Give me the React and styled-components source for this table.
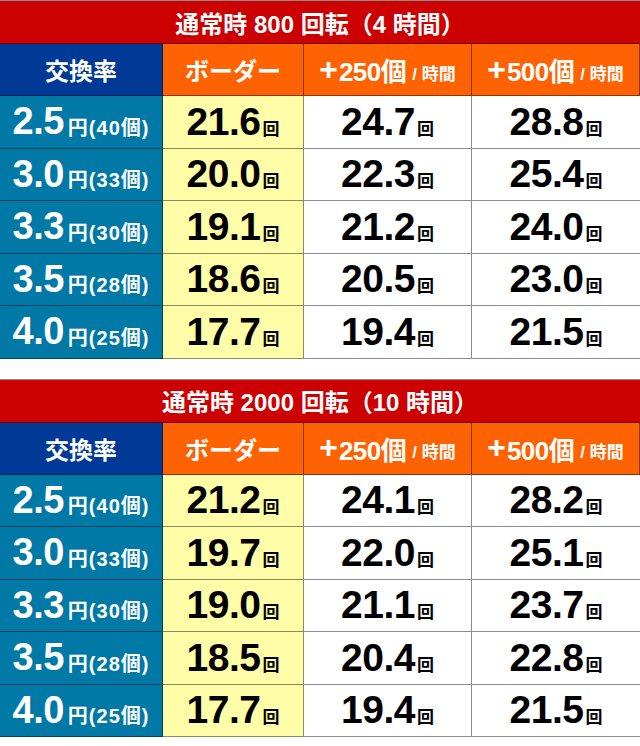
import React from 'react';
import styled, { createGlobalStyle } from 'styled-components';

const GlobalStyle = createGlobalStyle`
  html, body {
    margin: 0;
    padding: 0;
    background: #ffffff;
  }
  body {
    font-family: "Liberation Sans", "Noto Sans CJK JP", sans-serif;
    font-weight: 700;
  }
`;

const LINE = 'rgba(0, 0, 0, 0.45)';

const Page = styled.div`
  width: 640px;
  display: flex;
  flex-direction: column;
  gap: 20px;
`;

const Table = styled.section`
  display: grid;
  grid-template-columns: 163px 141px 168px 168px;
  grid-template-rows: 43px 52px repeat(5, 52.5px);
  border-top: 1px solid ${LINE};
  box-sizing: border-box;
`;

const Title = styled.div`
  grid-column: 1 / -1;
  background: #cc0000;
  color: #ffffff;
  font-size: 24px;
  display: flex;
  align-items: center;
  justify-content: center;
  border-bottom: 1px solid ${LINE};
`;

const Cell = styled.div`
  display: flex;
  align-items: center;
  justify-content: center;
  border-bottom: 1px solid ${LINE};
  border-right: 1px solid ${LINE};
  box-sizing: border-box;
  white-space: nowrap;
`;

const HeadCell = styled(Cell)`
  background: ${(p) => (p.$blue ? '#003a96' : '#ff6200')};
  color: #ffffff;
  font-size: 24px;
  &:last-child {
    border-right: none;
  }
`;

const PlusSign = styled.span`
  font-family: "Liberation Sans", sans-serif;
  font-size: 32px;
  line-height: 1;
  margin-right: 1px;
  margin-top: -2px;
`;

const Count = styled.span`
  font-size: 26px;
  letter-spacing: -0.5px;
`;

const PerHour = styled.span`
  font-size: 17px;
  margin-left: 6px;
  margin-top: 5px;
`;

const RateCell = styled(Cell)`
  background: #0079a6;
  color: #ffffff;
`;

const RateNum = styled.span`
  font-size: 38px;
  letter-spacing: -0.5px;
`;

const RateUnit = styled.span`
  font-size: 20px;
  margin-left: 4px;
  margin-top: 9px;
  letter-spacing: 1px;
`;

const ValueCell = styled(Cell)`
  background: ${(p) => (p.$yellow ? '#fffda8' : '#ffffff')};
  color: #000000;
  border-right: ${(p) => (p.$last ? 'none' : `1px solid ${LINE}`)};
`;

const ValueNum = styled.span`
  font-size: 39px;
  letter-spacing: -0.5px;
`;

const Kai = styled.span`
  font-size: 17px;
  margin-left: 2px;
  margin-top: 11px;
`;

const tables = [
  {
    title: '通常時 800 回転（4 時間）',
    rows: [
      ['2.5', '40', '21.6', '24.7', '28.8'],
      ['3.0', '33', '20.0', '22.3', '25.4'],
      ['3.3', '30', '19.1', '21.2', '24.0'],
      ['3.5', '28', '18.6', '20.5', '23.0'],
      ['4.0', '25', '17.7', '19.4', '21.5'],
    ],
  },
  {
    title: '通常時 2000 回転（10 時間）',
    rows: [
      ['2.5', '40', '21.2', '24.1', '28.2'],
      ['3.0', '33', '19.7', '22.0', '25.1'],
      ['3.3', '30', '19.0', '21.1', '23.7'],
      ['3.5', '28', '18.5', '20.4', '22.8'],
      ['4.0', '25', '17.7', '19.4', '21.5'],
    ],
  },
];

function Value({ value, yellow, last }) {
  return (
    <ValueCell $yellow={yellow} $last={last}>
      <ValueNum>{value}</ValueNum>
      <Kai>回</Kai>
    </ValueCell>
  );
}

function BonusHead({ count }) {
  return (
    <HeadCell>
      <PlusSign>+</PlusSign>
      <Count>{count}個</Count>
      <PerHour>/ 時間</PerHour>
    </HeadCell>
  );
}

function BorderTable({ title, rows }) {
  return (
    <Table>
      <Title>{title}</Title>
      <HeadCell $blue>交換率</HeadCell>
      <HeadCell>ボーダー</HeadCell>
      <BonusHead count="250" />
      <BonusHead count="500" />
      {rows.map(([rate, balls, border, v250, v500]) => (
        <React.Fragment key={rate}>
          <RateCell>
            <RateNum>{rate}</RateNum>
            <RateUnit>円({balls}個)</RateUnit>
          </RateCell>
          <Value value={border} yellow />
          <Value value={v250} />
          <Value value={v500} last />
        </React.Fragment>
      ))}
    </Table>
  );
}

export default function App() {
  return (
    <>
      <GlobalStyle />
      <Page>
        {tables.map((t) => (
          <BorderTable key={t.title} title={t.title} rows={t.rows} />
        ))}
      </Page>
    </>
  );
}
